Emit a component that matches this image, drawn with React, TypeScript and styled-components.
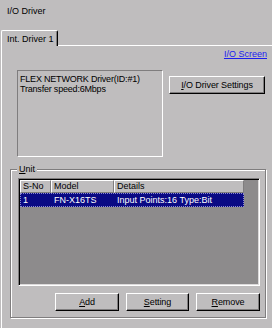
import styled, { createGlobalStyle } from "styled-components";

const Global = createGlobalStyle`
  html, body { margin: 0; padding: 0; background: #bfbdbe; }
  * { box-sizing: border-box; }
`;

const Window = styled.div`
  width: 272px;
  height: 328px;
  background: #bfbdbe;
  font-family: "Liberation Sans", Arial, sans-serif;
  font-size: 9px;
  color: #000;
  overflow: hidden;
`;

const Title = styled.div`
  height: 30px;
  padding: 6px 0 0 7px;
  line-height: 10px;
`;

const TabRow = styled.div`
  display: flex;
  align-items: flex-end;
  height: 16px;
`;

const Tab = styled.div`
  margin-left: 1px;
  width: 57px;
  height: 16px;
  padding: 3px 0 0 5px;
  line-height: 10px;
  border-top: 1px solid #fff;
  border-left: 1px solid #fff;
  border-right: 1px solid #000;
  box-shadow: inset -1px 0 0 #7f7d7e;
  border-top-left-radius: 2px;
  border-top-right-radius: 2px;
  white-space: nowrap;
`;

const TabFill = styled.div`
  flex: 1;
  border-bottom: 1px solid #fff;
`;

const Panel = styled.div`
  border-left: 1px solid #fff;
  margin-left: 1px;
  height: 282px;
`;

const LinkRow = styled.div`
  display: flex;
  justify-content: flex-end;
  padding: 3px 5px 0 0;
  line-height: 10px;
`;

const Link = styled.span`
  color: #1c1cf0;
  text-decoration: underline;
`;

const InfoRow = styled.div`
  display: flex;
  align-items: flex-start;
  gap: 6px;
  margin: 11px 0 0 15px;
`;

const InfoBox = styled.div`
  width: 146px;
  height: 87px;
  padding: 3px 0 0 2px;
  line-height: 10px;
  letter-spacing: -0.2px;
  border-top: 1px solid #7f7d7e;
  border-left: 1px solid #7f7d7e;
  border-right: 1px solid #fff;
  border-bottom: 1px solid #fff;
  white-space: nowrap;
  overflow: hidden;
`;

const Button = styled.div<{ w: number }>`
  width: ${(p) => p.w}px;
  height: 18px;
  display: flex;
  align-items: center;
  justify-content: center;
  border-top: 1px solid #fff;
  border-left: 1px solid #fff;
  border-right: 1px solid #000;
  border-bottom: 1px solid #000;
  box-shadow: inset -1px -1px 0 #7f7d7e;
  white-space: nowrap;
  letter-spacing: -0.1px;
`;

const SettingsButton = styled(Button)`
  margin-top: 6px;
`;

const Group = styled.div`
  position: relative;
  margin: 12px 0 0 8px;
  width: 256px;
  height: 149px;
  border: 1px solid #7f7d7e;
  box-shadow: inset 1px 1px 0 #fff, 1px 1px 0 #fff;
  padding: 8px 0 0 7px;
`;

const GroupLabel = styled.span`
  position: absolute;
  top: -6px;
  left: 6px;
  padding: 0 2px;
  line-height: 10px;
  background: #bfbdbe;
`;

const List = styled.div`
  width: 242px;
  height: 108px;
  background: #8d8b8c;
  border-top: 1px solid #7f7d7e;
  border-left: 1px solid #7f7d7e;
  border-right: 1px solid #fff;
  border-bottom: 1px solid #fff;
  box-shadow: inset 1px 1px 0 #000, inset -1px -1px 0 #dcdadb;
  padding: 1px 0 0 1px;
`;

const Cols = "31px 63px 130px";

const HeaderRow = styled.div`
  display: grid;
  grid-template-columns: ${Cols};
  height: 13px;
`;

const HeaderCell = styled.div`
  background: #bfbdbe;
  border-top: 1px solid #fff;
  border-left: 1px solid #fff;
  border-right: 1px solid #7f7d7e;
  border-bottom: 1px solid #7f7d7e;
  padding-left: 2px;
  line-height: 11px;
  white-space: nowrap;
  overflow: hidden;
`;

const Row = styled.div<{ selected?: boolean }>`
  display: grid;
  grid-template-columns: ${Cols};
  height: 14px;
  background: ${(p) => (p.selected ? "#0a0a84" : "transparent")};
  color: ${(p) => (p.selected ? "#fff" : "#000")};
  width: 224px;
  outline: ${(p) => (p.selected ? "1px dotted #8d8bd0" : "none")};
  outline-offset: -1px;
`;

const Cell = styled.div`
  padding: 2px 0 0 3px;
  line-height: 10px;
  white-space: nowrap;
  overflow: hidden;
`;

const ButtonRow = styled.div`
  display: flex;
  justify-content: flex-end;
  gap: 7px;
  width: 242px;
  margin-top: 7px;
`;

const U = styled.span`
  text-decoration: underline;
`;

export default function App() {
  return (
    <Window>
      <Global />
      <Title>I/O Driver</Title>
      <TabRow>
        <Tab>Int. Driver 1</Tab>
        <TabFill />
      </TabRow>
      <Panel>
        <LinkRow>
          <Link>I/O Screen</Link>
        </LinkRow>
        <InfoRow>
          <InfoBox>
            FLEX NETWORK Driver(ID:#1)
            <br />
            Transfer speed:6Mbps
          </InfoBox>
          <SettingsButton w={96}>
            <U>I</U>/O Driver Settings
          </SettingsButton>
        </InfoRow>
        <Group>
          <GroupLabel>
            <U>U</U>nit
          </GroupLabel>
          <List>
            <HeaderRow>
              <HeaderCell>S-No</HeaderCell>
              <HeaderCell>Model</HeaderCell>
              <HeaderCell>Details</HeaderCell>
            </HeaderRow>
            <Row selected>
              <Cell>1</Cell>
              <Cell>FN-X16TS</Cell>
              <Cell>Input Points:16 Type:Bit</Cell>
            </Row>
          </List>
          <ButtonRow>
            <Button w={64}>
              <U>A</U>dd
            </Button>
            <Button w={63}>
              <U>S</U>etting
            </Button>
            <Button w={64}>
              <U>R</U>emove
            </Button>
          </ButtonRow>
        </Group>
      </Panel>
    </Window>
  );
}
